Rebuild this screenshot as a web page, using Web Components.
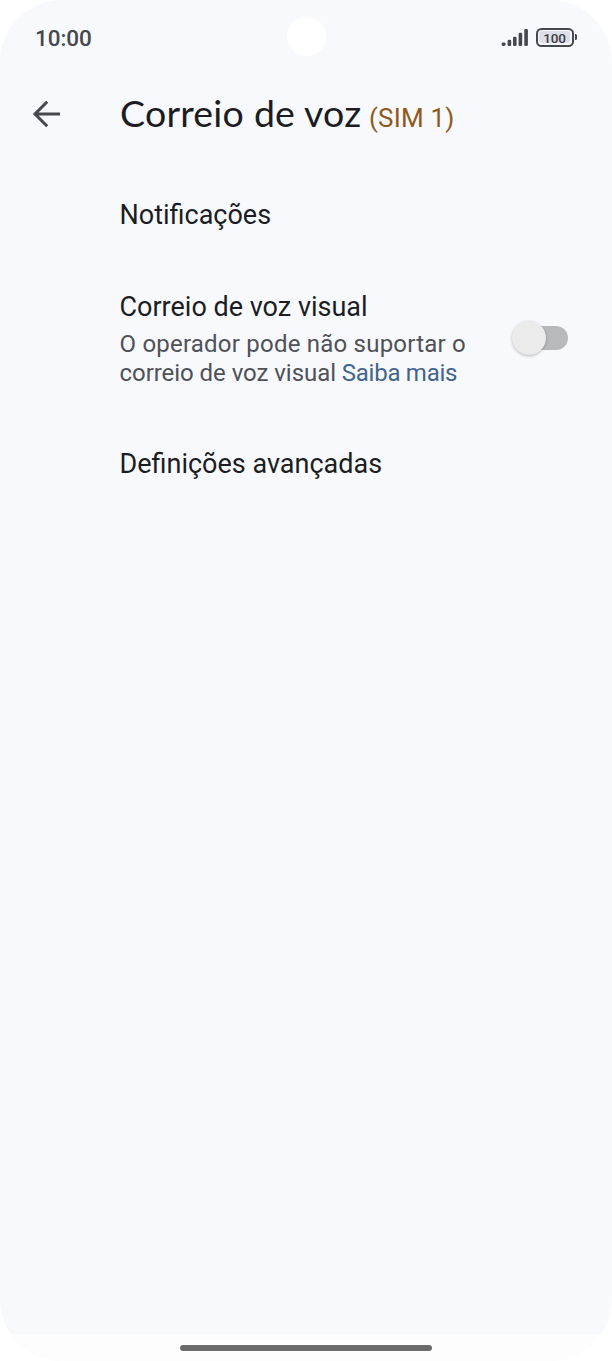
<!DOCTYPE html>
<html lang="pt">
<head>
<meta charset="utf-8">
<title>Correio de voz</title>
<style>
html,body{margin:0;background:#fff}
body{font-family:Roboto,sans-serif;color:#1c1d22}
</style>
</head>
<body>
<voicemail-screen></voicemail-screen>
<script>
const define=(name,html)=>customElements.define(name,class extends HTMLElement{
  constructor(){
    super();
    const t=document.createElement('template');
    t.innerHTML=html;
    this.attachShadow({mode:'open'}).append(t.content.cloneNode(true));
  }
});

define('signal-icon',`<style>:host{display:block;width:28px;height:19px}svg{display:block}</style>
<svg width="28" height="19" viewBox="0 0 28 19" fill="#46484d">
<rect x=".6" y="14.4" width="4" height="3.6" rx="1.4"/><rect x="6.6" y="11.7" width="3.6" height="6.3" rx="1.3"/><rect x="12" y="8.7" width="3.6" height="9.3" rx="1.3"/><rect x="17.6" y="4.8" width="3.6" height="13.2" rx="1.3"/><rect x="23.3" y="1" width="3.6" height="17" rx="1.3"/></svg>`);

define('battery-icon',`<style>
:host{display:flex;align-items:center}
.body{box-sizing:border-box;width:38px;height:19px;border:2px solid #46484d;border-radius:5.5px;padding:1.5px}
.fill{height:12px;border-radius:2.5px;background:#dddee7;color:#3c3e43;display:flex;align-items:center;justify-content:center;font:500 13.5px/12px Roboto,sans-serif;letter-spacing:-.2px}
.fill slot{display:block;padding-top:1px}
.tip{width:2.5px;height:6px;margin-left:1px;background:#46484d;border-radius:0 1.5px 1.5px 0}
</style><div class="body"><div class="fill"><slot></slot></div></div><div class="tip"></div>`);

define('status-bar',`<style>
:host{display:grid;grid-template-columns:1fr 39px 1fr;align-items:center;height:74px;padding:0 35px;box-sizing:border-box}
.time{font-size:22.5px;line-height:26px;font-weight:500;color:#46484d;letter-spacing:-.1px;padding-top:2px}
.cam{width:39px;height:39px;border-radius:50%;background:#fff;margin-top:-1px}
.right{display:flex;justify-content:flex-end;align-items:center;gap:7px}
</style><div class="time">10:00</div><div class="cam"></div>
<div class="right"><signal-icon></signal-icon><battery-icon>100</battery-icon></div>`);

define('app-header',`<style>
:host{display:flex;align-items:center;height:80px;padding-left:32px}
svg{display:block;flex:none;margin-right:59px}
.title{display:flex;align-items:baseline;white-space:nowrap;line-height:44px;padding-top:2px}
.name{font:400 37.5px/44px Lato,sans-serif;letter-spacing:.22px;width:249px}
.sim{font-size:26px;color:#8f5a1b;letter-spacing:.2px}
</style>
<svg width="29" height="28" viewBox="0 0 29 28" fill="none" stroke="#46484d" stroke-width="3"><path d="M28 14H4M15.2 1.8L3 14L15.2 26.2"/></svg>
<div class="title"><span class="name"><slot></slot></span><span class="sim"><slot name="sim"></slot></span></div>`);

define('toggle-switch',`<style>
:host{display:flex;align-items:center;width:56px;height:35px}
.track{width:52px;height:24px;margin-left:4px;border-radius:12px;background:#b8b9bd;display:flex;align-items:center}
.knob{flex:none;width:34px;height:34px;margin-left:-4px;border-radius:50%;background:#ebebeb;box-shadow:0 1px 3px #0004}
</style><div class="track"><div class="knob"></div></div>`);

define('setting-row',`<style>
:host{display:flex;align-items:center;box-sizing:border-box;padding:0 44px 0 119.5px}
.text{flex:1;white-space:nowrap}
.label{font-size:27px;line-height:36px}
</style><div class="text"><div class="label"><slot></slot></div><slot name="summary"></slot></div><slot name="control"></slot>`);

define('row-summary',`<style>
:host{display:block;font-size:24px;line-height:29px;color:#4f5157;padding-top:5px}
.first{letter-spacing:.22px}
.second{letter-spacing:-.05px}
a{color:#41658e;letter-spacing:-.27px}
</style><div class="first">O operador pode não suportar o</div><div class="second">correio de voz visual <a>Saiba mais</a></div>`);

define('voicemail-screen',`<style>
:host{display:flex;flex-direction:column;width:612px;height:1361px;border-radius:62px;overflow:hidden;background:#f8f9fd}
main{flex:1;padding-top:1px}
setting-row{height:84px;margin-top:18px}
.visual{height:122px;margin-top:20px}
.last{margin-top:23px}
footer{height:27px;background:#fdfdfe;display:flex;align-items:center;justify-content:center}
.bar{width:252px;height:6px;border-radius:3px;background:#6b6b6c}
</style>
<status-bar></status-bar>
<app-header>Correio de voz<span slot="sim">(SIM 1)</span></app-header>
<main>
<setting-row>Notificações</setting-row>
<setting-row class="visual">Correio de voz visual<row-summary slot="summary"></row-summary><toggle-switch slot="control"></toggle-switch></setting-row>
<setting-row class="last">Definições avançadas</setting-row>
</main>
<footer><div class="bar"></div></footer>`);
</script>
</body>
</html>
